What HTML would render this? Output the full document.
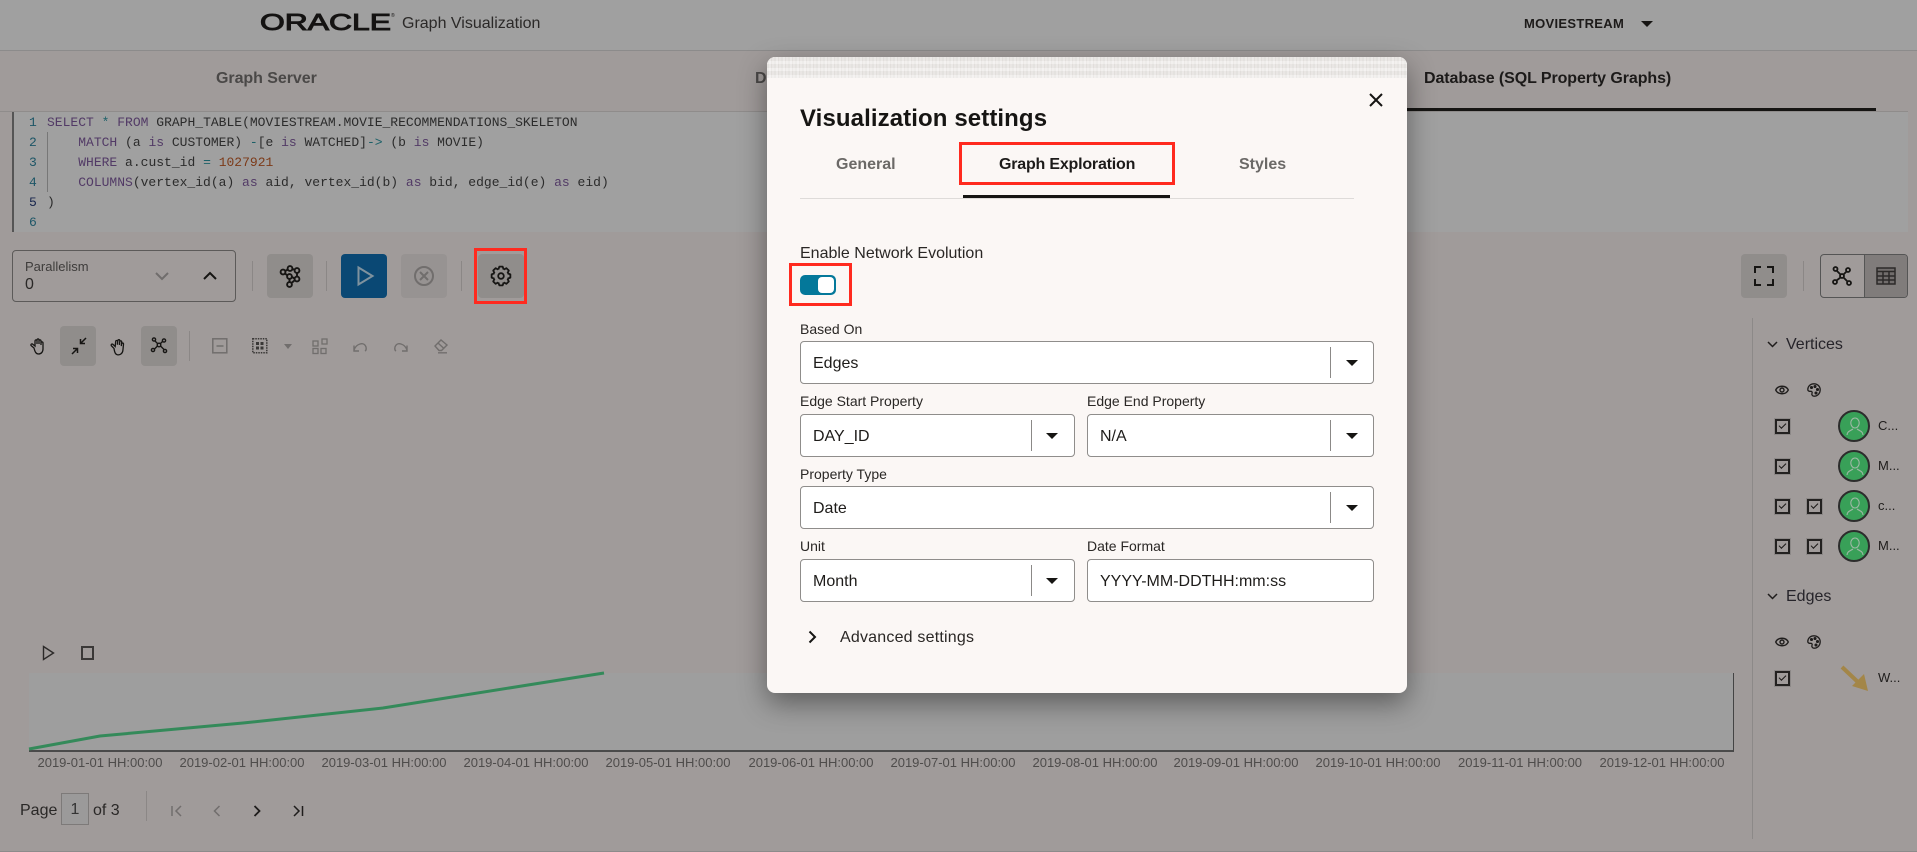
<!DOCTYPE html>
<html><head><meta charset="utf-8"><title>Graph Visualization</title>
<style>
html,body{margin:0;padding:0;width:1917px;height:852px;overflow:hidden;background:#a09b9a;font-family:"Liberation Sans",sans-serif;color:#1a1816}
.a{position:absolute}
.t{position:absolute;white-space:nowrap;line-height:20px}
svg{position:absolute;overflow:visible}
.btn{position:absolute;top:254px;width:46px;height:44px;border-radius:4px;background:#908d8b}
.sep{position:absolute;width:1px;background:#8b8786}
.red{position:absolute;box-sizing:border-box;border:3px solid #ff2a1f}
.code{position:absolute;white-space:pre;font:13px/20px "Liberation Mono",monospace;color:#2b2b2b;left:47px}
.ln{position:absolute;font:13px/20px "Liberation Mono",monospace;color:#1c5566;left:29px}
.k{color:#523a66}.n{color:#7c3a18}.o{color:#1c6068}
.lab{position:absolute;font-size:14px;line-height:18px;color:#2a2725;white-space:nowrap}
.in{position:absolute;box-sizing:border-box;height:43px;background:#fff;border:1px solid #8f8d8b;border-radius:4px;font-size:16px;line-height:43px;padding-left:12px;color:#1e1c1a;white-space:nowrap}
.in i{position:absolute;top:5px;bottom:5px;width:1px;background:#8b8987}
.in b{position:absolute;top:18px;width:0;height:0;border-left:6px solid transparent;border-right:6px solid transparent;border-top:6px solid #161513}
.x{position:absolute;font-size:13px;line-height:16px;top:755px;color:#4e4c4b;white-space:nowrap;transform:translateX(-50%)}
.cb{position:absolute;box-sizing:border-box;width:15px;height:15px;border:2px solid #232120;box-shadow:0 0 0 1px #8c8887}
.cb:after{content:"";position:absolute;left:2px;top:1.500px;width:6px;height:3px;border-left:1.500px solid #1a1816;border-bottom:1.500px solid #1a1816;transform:rotate(-45deg)}
.av{position:absolute;left:1838px;box-sizing:border-box;width:32px;height:32px;border-radius:50%;background:#38a058;border:2px solid #2c2c2c}
.vt{position:absolute;left:1878px;font-size:13px;line-height:16px;color:#1f1d1c}
</style></head><body>

<!-- header -->
<div class="a" style="left:0;top:0;width:1917px;height:50px;background:#a0a0a0;border-bottom:1px solid #8c8b8b;box-sizing:content-box"></div>
<svg style="left:258px;top:8px" width="140" height="26" viewBox="0 0 140 26"><text x="2" y="22" font-family="Liberation Sans" font-size="23.5" fill="#141312" stroke="#141312" stroke-width="1" textLength="131" lengthAdjust="spacingAndGlyphs">ORACLE</text><text x="133" y="9" font-size="5" fill="#141312" font-family="Liberation Sans">®</text></svg>
<div class="t" style="left:402px;top:14px;font-size:16px;color:#2b2928">Graph Visualization</div>
<div class="t" style="left:1524px;top:14px;font-size:13px;font-weight:bold;letter-spacing:.3px;color:#1d1b1a">MOVIESTREAM</div>
<div class="a" style="left:1641px;top:21px;width:0;height:0;border-left:6px solid transparent;border-right:6px solid transparent;border-top:6px solid #161513"></div>

<!-- tabs -->
<div class="t" style="left:216px;top:69px;font-size:16px;font-weight:bold;letter-spacing:-.05px;color:#4a4847">Graph Server</div>
<div class="t" style="left:755px;top:69px;font-size:16px;font-weight:bold;color:#4a4847">Database</div>
<div class="t" style="left:1424px;top:69px;font-size:16px;font-weight:bold;letter-spacing:-.08px;color:#1c1a19">Database (SQL Property Graphs)</div>
<div class="a" style="left:0;top:111px;width:1908px;height:1px;background:#8f8c8b"></div>
<div class="a" style="left:1300px;top:108px;width:576px;height:3px;background:#161513"></div>

<!-- editor -->
<div class="a" style="left:12px;top:112px;width:1896px;height:120px;background:#a0a0a0;border-left:2px solid #555;box-sizing:border-box"></div>
<div class="a" style="left:47px;top:132px;width:1px;height:60px;background:#777"></div>
<div class="ln" style="top:113px">1</div><div class="ln" style="top:133px">2</div><div class="ln" style="top:153px">3</div><div class="ln" style="top:173px">4</div><div class="ln" style="top:193px;color:#16244c">5</div><div class="ln" style="top:213px">6</div>
<div class="code" style="top:113px"><span class="k">SELECT</span> <span class="o">*</span> <span class="k">FROM</span> GRAPH_TABLE(MOVIESTREAM.MOVIE_RECOMMENDATIONS_SKELETON</div>
<div class="code" style="top:133px">    <span class="k">MATCH</span> (a <span class="k">is</span> CUSTOMER) <span class="o">-</span>[e <span class="k">is</span> WATCHED]<span class="o">-&gt;</span> (b <span class="k">is</span> MOVIE)</div>
<div class="code" style="top:153px">    <span class="k">WHERE</span> a.cust_id <span class="o">=</span> <span class="n">1027921</span></div>
<div class="code" style="top:173px">    <span class="k">COLUMNS</span>(vertex_id(a) <span class="k">as</span> aid, vertex_id(b) <span class="k">as</span> bid, edge_id(e) <span class="k">as</span> eid)</div>
<div class="code" style="top:193px">)</div>

<!-- toolbar -->
<div class="a" style="left:12px;top:250px;width:224px;height:52px;box-sizing:border-box;border:1px solid #5c5a59;border-radius:4px"></div>
<div class="t" style="left:25px;top:257px;font-size:13px;color:#3e3c3b">Parallelism</div>
<div class="t" style="left:25px;top:275px;font-size:16px;color:#2a2827">0</div>
<svg style="left:155px;top:270px" width="14" height="12" fill="none" stroke="#706d6c" stroke-width="2"><path d="M1 3l6 6 6-6"/></svg>
<svg style="left:203px;top:270px" width="14" height="12" fill="none" stroke="#161513" stroke-width="2"><path d="M1 9l6-6 6 6"/></svg>
<div class="sep" style="left:252px;top:261px;height:30px"></div>
<div class="btn" style="left:267px"></div>
<svg style="left:279px;top:265px" width="22" height="22" fill="none" stroke="#161513" stroke-width="1.900"><circle cx="4" cy="7" r="2.400"/><circle cx="11" cy="3.500" r="2.400"/><circle cx="18" cy="5.500" r="2.400"/><circle cx="10.500" cy="11.500" r="2.400"/><circle cx="18" cy="14" r="2.400"/><circle cx="10.500" cy="19.500" r="2.400"/><path d="M6 6l3-1.500M13.500 4l2 .800M18 8v3.500M16 15l-3.500 3M6 8.500l2.500 2M10.500 14v3M13 12l2.500 1.500"/></svg>
<div class="sep" style="left:326px;top:261px;height:30px"></div>
<div class="btn" style="left:341px;background:#0a4874"></div>
<svg style="left:355px;top:264px" width="22" height="24" fill="none" stroke="#7f929e" stroke-width="2"><path d="M3.500 3.500l14 8.500-14 8.500z"/></svg>
<div class="btn" style="left:401px;background:#979392"></div>
<svg style="left:414px;top:266px" width="20" height="20" fill="none" stroke="#716e6d" stroke-width="2"><circle cx="10" cy="10" r="9"/><path d="M6 6l8 8M14 6l-8 8"/></svg>
<div class="sep" style="left:461px;top:261px;height:30px"></div>
<div class="btn" style="left:478px"></div>
<svg style="left:491px;top:266px" width="20" height="20" viewBox="0 0 20 20" fill="none" stroke="#161513" stroke-width="1.800" stroke-linejoin="round"><circle cx="10" cy="10" r="2.800"/>
<path d="M7.320 3.530L8.350 .640H11.650L12.680 3.530"/><path transform="rotate(45 10 10)" d="M7.320 3.530L8.350 .640H11.650L12.680 3.530"/><path transform="rotate(90 10 10)" d="M7.320 3.530L8.350 .640H11.650L12.680 3.530"/><path transform="rotate(135 10 10)" d="M7.320 3.530L8.350 .640H11.650L12.680 3.530"/><path transform="rotate(180 10 10)" d="M7.320 3.530L8.350 .640H11.650L12.680 3.530"/><path transform="rotate(225 10 10)" d="M7.320 3.530L8.350 .640H11.650L12.680 3.530"/><path transform="rotate(270 10 10)" d="M7.320 3.530L8.350 .640H11.650L12.680 3.530"/><path transform="rotate(315 10 10)" d="M7.320 3.530L8.350 .640H11.650L12.680 3.530"/></svg>
<div class="red" style="left:474px;top:248px;width:53px;height:56px"></div>

<div class="btn" style="left:1741px"></div>
<svg style="left:1754px;top:266px" width="20" height="20" fill="none" stroke="#161513" stroke-width="2"><path d="M1 7V1h6M13 1h6v6M19 13v6h-6M7 19H1v-6"/></svg>
<div class="sep" style="left:1803px;top:261px;height:30px"></div>
<div class="a" style="left:1820px;top:254px;width:88px;height:44px;box-sizing:border-box;border:1px solid #555;border-radius:4px;overflow:hidden"><div class="a" style="left:43px;top:0;width:44px;height:42px;background:#807c7b;border-left:1px solid #555"></div></div>
<svg style="left:1832px;top:266px" width="20" height="20" fill="none" stroke="#161513" stroke-width="1.800"><circle cx="10" cy="10" r="2"/><circle cx="3.500" cy="3" r="2"/><circle cx="16" cy="4" r="2"/><circle cx="3" cy="16" r="2"/><circle cx="17" cy="17" r="2"/><path d="M5 5l3.500 3.500M14.500 5.500l-3 3M4.500 14.500l4-3M15.500 15.500l-4-4"/></svg>
<svg style="left:1876px;top:267px" width="20" height="18" fill="none" stroke="#2c2a29" stroke-width="1.500"><rect x="1" y="1" width="18" height="16" fill="#55524f" fill-opacity=".35"/><path d="M1 4.500h18M1 9h18M1 13h18M7 4.500V17M13 4.500V17" /></svg>

<!-- secondary toolbar -->
<div class="a" style="left:60px;top:326px;width:36px;height:40px;background:#908d8b;border-radius:4px"></div>
<div class="a" style="left:141px;top:326px;width:36px;height:40px;background:#908d8b;border-radius:4px"></div>
<div class="sep" style="left:189px;top:331px;height:30px"></div>
<svg style="left:30px;top:338px" width="17" height="17" fill="none" stroke="#161513" stroke-width="1.300"><path d="M4 10L1 7.500c-.5-1 .5-2 1.500-1.500L5 8V3c0-1.500 2-1.500 2 0v3V2c0-1.500 2-1.500 2 0v4V3c0-1.500 2-1.500 2 0v4-2c0-1.500 2-1.500 2 0v6c0 3-2 5-4.500 5S5 14 4 10z"/></svg>
<svg style="left:70px;top:337px" width="18" height="18" fill="none" stroke="#161513" stroke-width="1.500"><path d="M16 1l-5.500 5.500M10.500 2v4.500H15M2 17l5.500-5.500M7.500 16v-4.500H3"/></svg>
<svg style="left:110px;top:338px" width="17" height="17" fill="none" stroke="#161513" stroke-width="1.300"><path d="M4 10L1 7.500c-.5-1 .5-2 1.500-1.500L5 8V3c0-1.500 2-1.500 2 0v3V2c0-1.500 2-1.500 2 0v4V3c0-1.500 2-1.500 2 0v4-2c0-1.500 2-1.500 2 0v6c0 3-2 5-4.500 5S5 14 4 10z" transform="matrix(1 .1 -.1 1 1 0)"/></svg>
<svg style="left:151px;top:337px" width="16" height="16" fill="none" stroke="#161513" stroke-width="1.400"><circle cx="8" cy="8" r="1.800"/><circle cx="3" cy="2.500" r="1.600"/><circle cx="13" cy="3.500" r="1.600"/><circle cx="2" cy="13" r="1.600"/><circle cx="14" cy="14" r="1.600"/><path d="M4 4l3 3M11.500 4.500l-2.500 2.500M3.500 12l3-3M13 12.500l-3.500-3.500"/></svg>
<svg style="left:212px;top:338px" width="16" height="16" fill="none" stroke="#716e6d" stroke-width="1.500"><rect x=".8" y=".8" width="14" height="14"/><path d="M4.500 8h7"/></svg>
<svg style="left:252px;top:338px" width="16" height="16" fill="none" stroke="#3a3837"><rect x=".8" y=".8" width="14" height="14" stroke-dasharray="1.500 1" stroke-width="1.500"/><g fill="#3a3837" stroke="none"><rect x="4" y="4" width="3" height="3"/><rect x="8.500" y="4" width="3" height="3"/><rect x="4" y="8.500" width="3" height="3"/><rect x="8.500" y="8.500" width="3" height="3"/></g></svg>
<div class="a" style="left:284px;top:344px;width:0;height:0;border-left:4px solid transparent;border-right:4px solid transparent;border-top:5px solid #716e6d"></div>
<svg style="left:312px;top:338px" width="16" height="16" fill="none" stroke="#716e6d" stroke-width="1.300"><rect x="1" y="3" width="5" height="5"/><rect x="10" y="1" width="5" height="5"/><rect x="1" y="10.500" width="5" height="5"/><rect x="9" y="10.500" width="5" height="5"/></svg>
<svg style="left:353px;top:340px" width="15" height="13" fill="none" stroke="#716e6d" stroke-width="1.400"><path d="M1 5.500l0 5.500h5M1 10c2-6 10-9 12-3 .5 2-.2 3.500-1 4"/></svg>
<svg style="left:393px;top:340px" width="15" height="13" fill="none" stroke="#716e6d" stroke-width="1.400"><path d="M14 5.500V11H9M14 10C12 4 4 1 2 7c-.5 2 .2 3.500 1 4"/></svg>
<svg style="left:434px;top:338px" width="15" height="16" fill="none" stroke="#716e6d" stroke-width="1.400"><path d="M1 8l6-6 6 5-5.500 5.500H5z"/><path d="M4 5l6 5.500M4 14.800h9"/></svg>

<!-- timeline -->
<svg style="left:42px;top:645px" width="14" height="16" fill="none" stroke="#2c2a29" stroke-width="1.400"><path d="M1.500 1.500l10 6.500-10 6.500z"/></svg>
<div class="a" style="left:81px;top:646px;width:13px;height:14px;box-sizing:border-box;border:2px solid #3a3837"></div>
<div class="a" style="left:29px;top:673px;width:1704px;height:77px;background:#9e9e9e;border-right:1px solid #444;border-bottom:2px solid #4a4a4a;box-sizing:content-box"></div>
<svg style="left:0;top:0" width="1917" height="852" fill="none"><path d="M29 749L100 736L243 723L383 708L528 685L604 673" stroke="#348a5a" stroke-width="3"/></svg>
<div class="x" style="left:100px">2019-01-01 HH:00:00</div>
<div class="x" style="left:242px">2019-02-01 HH:00:00</div>
<div class="x" style="left:384px">2019-03-01 HH:00:00</div>
<div class="x" style="left:526px">2019-04-01 HH:00:00</div>
<div class="x" style="left:668px">2019-05-01 HH:00:00</div>
<div class="x" style="left:811px">2019-06-01 HH:00:00</div>
<div class="x" style="left:953px">2019-07-01 HH:00:00</div>
<div class="x" style="left:1095px">2019-08-01 HH:00:00</div>
<div class="x" style="left:1236px">2019-09-01 HH:00:00</div>
<div class="x" style="left:1378px">2019-10-01 HH:00:00</div>
<div class="x" style="left:1520px">2019-11-01 HH:00:00</div>
<div class="x" style="left:1662px">2019-12-01 HH:00:00</div>

<!-- pager -->
<div class="t" style="left:20px;top:801px;font-size:16px;color:#2a2827">Page</div>
<div class="a" style="left:61px;top:793px;width:28px;height:32px;box-sizing:border-box;border:1px solid #7d7a79;background:#9b9a9a;text-align:center;font-size:16px;line-height:31px;color:#333">1</div>
<div class="t" style="left:93px;top:801px;font-size:16px;color:#2a2827">of 3</div>
<div class="sep" style="left:146px;top:791px;height:30px"></div>
<svg style="left:171px;top:805px" width="12" height="12" fill="none" stroke="#716e6d" stroke-width="1.500"><path d="M1 1v10M10 1L5 6l5 5"/></svg>
<svg style="left:213px;top:805px" width="8" height="12" fill="none" stroke="#716e6d" stroke-width="1.500"><path d="M6.500 1L1.500 6l5 5"/></svg>
<svg style="left:253px;top:805px" width="8" height="12" fill="none" stroke="#1f1d1c" stroke-width="1.800"><path d="M1.500 1l5 5-5 5"/></svg>
<svg style="left:292px;top:805px" width="12" height="12" fill="none" stroke="#1f1d1c" stroke-width="1.500"><path d="M2 1l5 5-5 5M10.500 1v10"/></svg>

<!-- right panel -->
<div class="a" style="left:1752px;top:318px;width:1px;height:521px;background:#8c8988"></div>
<svg style="left:1767px;top:341px" width="11" height="7" fill="none" stroke="#1f1d1c" stroke-width="1.500"><path d="M1 1l4.500 4.500L10 1"/></svg>
<div class="t" style="left:1786px;top:335px;font-size:16px;color:#26242a">Vertices</div>
<svg style="left:1775px;top:385px" width="14" height="10" fill="none" stroke="#1f1d1c" stroke-width="1.400"><path d="M.7 5C3 0 11 0 13.300 5 11 10 3 10 .7 5z"/><circle cx="7" cy="5" r="2"/></svg>
<svg style="left:1807px;top:383px" width="14" height="14" fill="none" stroke="#1f1d1c" stroke-width="1.300"><path d="M7 .8C3 .8.800 3.500.800 6.500c0 1.800 2 2 3 1.800 1.200 0 1.700 1 1.200 2-.5 1.200.3 2.900 2 2.900 3.800 0 6.200-3 6.200-6.400S10.500.8 7 .8z"/><circle cx="4.500" cy="4.500" r=".9" fill="#1f1d1c"/><circle cx="8" cy="3.500" r=".9" fill="#1f1d1c"/><circle cx="10.500" cy="6.500" r=".9" fill="#1f1d1c"/><circle cx="9" cy="10" r=".9" fill="#1f1d1c"/></svg>

<div class="cb" style="left:1775px;top:419px"></div>
<div class="cb" style="left:1775px;top:459px"></div>
<div class="cb" style="left:1775px;top:499px"></div><div class="cb" style="left:1807px;top:499px"></div>
<div class="cb" style="left:1775px;top:539px"></div><div class="cb" style="left:1807px;top:539px"></div>

<div class="av" style="top:410px"><svg style="left:6px;top:5px" width="18" height="19" fill="none" stroke="#9fb8a6" stroke-width="1.100"><ellipse cx="9" cy="6" rx="4.200" ry="5"/><path d="M1 18c0-3.500 3-4 6-6M17 18c0-3.500-3-4-6-6"/></svg></div>
<div class="av" style="top:450px"><svg style="left:6px;top:5px" width="18" height="19" fill="none" stroke="#9fb8a6" stroke-width="1.100"><ellipse cx="9" cy="6" rx="4.200" ry="5"/><path d="M1 18c0-3.500 3-4 6-6M17 18c0-3.500-3-4-6-6"/></svg></div>
<div class="av" style="top:490px"><svg style="left:6px;top:5px" width="18" height="19" fill="none" stroke="#9fb8a6" stroke-width="1.100"><ellipse cx="9" cy="6" rx="4.200" ry="5"/><path d="M1 18c0-3.500 3-4 6-6M17 18c0-3.500-3-4-6-6"/></svg></div>
<div class="av" style="top:530px"><svg style="left:6px;top:5px" width="18" height="19" fill="none" stroke="#9fb8a6" stroke-width="1.100"><ellipse cx="9" cy="6" rx="4.200" ry="5"/><path d="M1 18c0-3.500 3-4 6-6M17 18c0-3.500-3-4-6-6"/></svg></div>
<div class="vt" style="top:418px">C...</div>
<div class="vt" style="top:458px">M...</div>
<div class="vt" style="top:498px">c...</div>
<div class="vt" style="top:538px">M...</div>

<svg style="left:1767px;top:593px" width="11" height="7" fill="none" stroke="#1f1d1c" stroke-width="1.500"><path d="M1 1l4.500 4.500L10 1"/></svg>
<div class="t" style="left:1786px;top:587px;font-size:16px;color:#26242a">Edges</div>
<svg style="left:1775px;top:637px" width="14" height="10" fill="none" stroke="#1f1d1c" stroke-width="1.400"><path d="M.7 5C3 0 11 0 13.300 5 11 10 3 10 .7 5z"/><circle cx="7" cy="5" r="2"/></svg>
<svg style="left:1807px;top:635px" width="14" height="14" fill="none" stroke="#1f1d1c" stroke-width="1.300"><path d="M7 .8C3 .8.800 3.500.800 6.500c0 1.800 2 2 3 1.800 1.200 0 1.700 1 1.200 2-.5 1.200.3 2.900 2 2.900 3.800 0 6.200-3 6.200-6.400S10.500.8 7 .8z"/><circle cx="4.500" cy="4.500" r=".9" fill="#1f1d1c"/><circle cx="8" cy="3.500" r=".9" fill="#1f1d1c"/><circle cx="10.500" cy="6.500" r=".9" fill="#1f1d1c"/><circle cx="9" cy="10" r=".9" fill="#1f1d1c"/></svg>
<div class="cb" style="left:1775px;top:671px"></div>
<svg style="left:1840px;top:665px" width="30" height="28"><path d="M2 2L20 19" stroke="#a38648" stroke-width="4"/><path d="M28 26L12 21L24 9z" fill="#a38648"/></svg>
<div class="vt" style="top:670px">W...</div>
<div class="a" style="left:0;top:851px;width:1917px;height:1px;background:#8c8b8b"></div>

<!-- modal -->
<div class="a" style="left:767px;top:57px;width:640px;height:636px;background:#fbf7f5;border-radius:8px;box-shadow:0 10px 28px rgba(0,0,0,.42);overflow:hidden">
  <div class="a" style="left:0;top:0;width:640px;height:21px;background:repeating-linear-gradient(0deg,rgba(255,255,255,.25) 0 3px,rgba(0,0,0,.02) 3px 7px),repeating-linear-gradient(90deg,#e9e6e3 0 2px,#f1eeec 2px 4px,#e5e2df 4px 5px,#eeebe9 5px 7px)"></div>
</div>
<svg style="left:1369px;top:93px" width="14" height="14" fill="none" stroke="#161513" stroke-width="2"><path d="M1 1l12 12M13 1L1 13"/></svg>
<div class="t" style="left:800px;top:104px;font-size:24px;line-height:30px;font-weight:bold;letter-spacing:.1px;color:#161513">Visualization settings</div>
<div class="t" style="left:836px;top:155px;font-size:16px;font-weight:bold;color:#6b6967">General</div>
<div class="t" style="left:999px;top:155px;font-size:16px;font-weight:bold;letter-spacing:-.2px;color:#1d1b1a">Graph Exploration</div>
<div class="t" style="left:1239px;top:155px;font-size:16px;font-weight:bold;color:#6b6967">Styles</div>
<div class="red" style="left:959px;top:142px;width:216px;height:43px"></div>
<div class="a" style="left:800px;top:198px;width:554px;height:1px;background:#dedbd9"></div>
<div class="a" style="left:963px;top:195px;width:207px;height:3px;background:#161513"></div>

<div class="t" style="left:800px;top:244px;font-size:16px;color:#2a2725">Enable Network Evolution</div>
<div class="a" style="left:800px;top:275px;width:36px;height:20px;border-radius:5px;background:#04789a"></div>
<div class="a" style="left:818px;top:277px;width:16px;height:16px;border-radius:4px;background:#fff"></div>
<div class="red" style="left:789px;top:263px;width:63px;height:43px"></div>

<div class="lab" style="left:800px;top:320px">Based On</div>
<div class="in" style="left:800px;top:341px;width:574px">Edges<i style="left:529px"></i><b style="left:545px"></b></div>
<div class="lab" style="left:800px;top:392px">Edge Start Property</div>
<div class="lab" style="left:1087px;top:392px">Edge End Property</div>
<div class="in" style="left:800px;top:414px;width:275px">DAY_ID<i style="left:230px"></i><b style="left:245px"></b></div>
<div class="in" style="left:1087px;top:414px;width:287px">N/A<i style="left:242px"></i><b style="left:258px"></b></div>
<div class="lab" style="left:800px;top:465px">Property Type</div>
<div class="in" style="left:800px;top:486px;width:574px">Date<i style="left:529px"></i><b style="left:545px"></b></div>
<div class="lab" style="left:800px;top:537px">Unit</div>
<div class="lab" style="left:1087px;top:537px">Date Format</div>
<div class="in" style="left:800px;top:559px;width:275px">Month<i style="left:230px"></i><b style="left:245px"></b></div>
<div class="in" style="left:1087px;top:559px;width:287px">YYYY-MM-DDTHH:mm:ss</div>
<svg style="left:808px;top:630px" width="9" height="14" fill="none" stroke="#161513" stroke-width="2"><path d="M1.500 1.500L7 7l-5.500 5.500"/></svg>
<div class="t" style="left:840px;top:628px;font-size:16px;letter-spacing:.2px;color:#2a2725">Advanced settings</div>
</body></html>
